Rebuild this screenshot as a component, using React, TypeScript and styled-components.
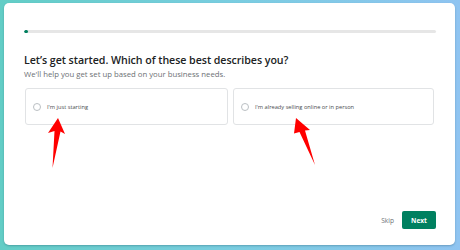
import React from "react";
import styled, { createGlobalStyle } from "styled-components";

const Global = createGlobalStyle`
  html, body { margin: 0; padding: 0; }
  body {
    width: 460px;
    height: 250px;
    overflow: hidden;
    background: linear-gradient(90deg, #62cdc6 0%, #79cde0 50%, #8fc4f1 100%);
    font-family: "Open Sans", "Noto Sans", sans-serif;
  }
`;

const Stage = styled.div`
  position: relative;
  box-sizing: border-box;
  width: 460px;
  height: 250px;
  padding: 3px 5px 5px 4px;
`;

const Card = styled.div`
  box-sizing: border-box;
  height: 242px;
  background: #ffffff;
  border-radius: 5px;
  box-shadow: 0 1px 2px rgba(0, 40, 60, 0.25);
  padding: 27px 19px 16px 20px;
  display: flex;
  flex-direction: column;
`;

const Track = styled.div`
  height: 3px;
  background: #e6e6e6;
  border-radius: 2px;
  overflow: hidden;
`;

const Fill = styled.div<{ $pct: number }>`
  height: 100%;
  width: ${(p) => p.$pct}%;
  background: #008060;
  border-radius: 2px;
`;

const Heading = styled.h1`
  margin: 20px 0 0 0;
  font-size: 10.65px;
  line-height: 14px;
  font-weight: 600;
  color: #202223;
  letter-spacing: -0.05px;
`;

const Sub = styled.p`
  margin: 2px 0 0 0;
  font-size: 7.75px;
  line-height: 10px;
  color: #6d7175;
`;

const Options = styled.div`
  margin: 9px 2px 0 1px;
  display: grid;
  grid-template-columns: 203px 201px;
  column-gap: 5px;
`;

const Option = styled.label`
  box-sizing: border-box;
  height: 37px;
  border: 1px solid #e1e3e5;
  border-radius: 3px;
  display: flex;
  align-items: center;
  gap: 6px;
  padding-left: 7px;
  cursor: pointer;
`;

const Radio = styled.span`
  box-sizing: border-box;
  width: 8px;
  height: 8px;
  border-radius: 50%;
  border: 1px solid #babfc3;
  background: #fff;
  flex: none;
`;

const OptionText = styled.span`
  font-size: 5.7px;
  color: #4a4d50;
`;

const Footer = styled.div`
  margin-top: auto;
  display: flex;
  justify-content: flex-end;
  align-items: center;
  gap: 8px;
`;

const SkipButton = styled.button`
  border: none;
  background: transparent;
  padding: 0;
  font-family: inherit;
  font-size: 6.6px;
  color: #6d7175;
`;

const NextButton = styled.button`
  border: none;
  width: 34px;
  height: 18px;
  border-radius: 2px;
  background: #008060;
  color: #ffffff;
  font-family: inherit;
  font-size: 6.6px;
  font-weight: 700;
  padding: 0;
`;

const Annotations = styled.svg`
  position: absolute;
  left: 0;
  top: 0;
  pointer-events: none;
`;

export default function App() {
  return (
    <>
      <Global />
      <Stage>
        <Card>
          <Track>
            <Fill $pct={1} />
          </Track>
          <Heading>Let’s get started. Which of these best describes you?</Heading>
          <Sub>We'll help you get set up based on your business needs.</Sub>
          <Options>
            <Option>
              <Radio />
              <OptionText>I'm just starting</OptionText>
            </Option>
            <Option>
              <Radio />
              <OptionText>I'm already selling online or in person</OptionText>
            </Option>
          </Options>
          <Footer>
            <SkipButton>Skip</SkipButton>
            <NextButton>Next</NextButton>
          </Footer>
        </Card>
        <Annotations width="460" height="250" viewBox="0 0 460 250">
          <path d="M58 118 L65 134 L60.5 131.5 L52.5 168 L54.5 131 L48 133 Z" fill="#ff0000" />
          <path d="M296 118 L310 130 L305 130.5 L315 165 L299.5 132 L294 133.5 Z" fill="#ff0000" />
        </Annotations>
      </Stage>
    </>
  );
}
